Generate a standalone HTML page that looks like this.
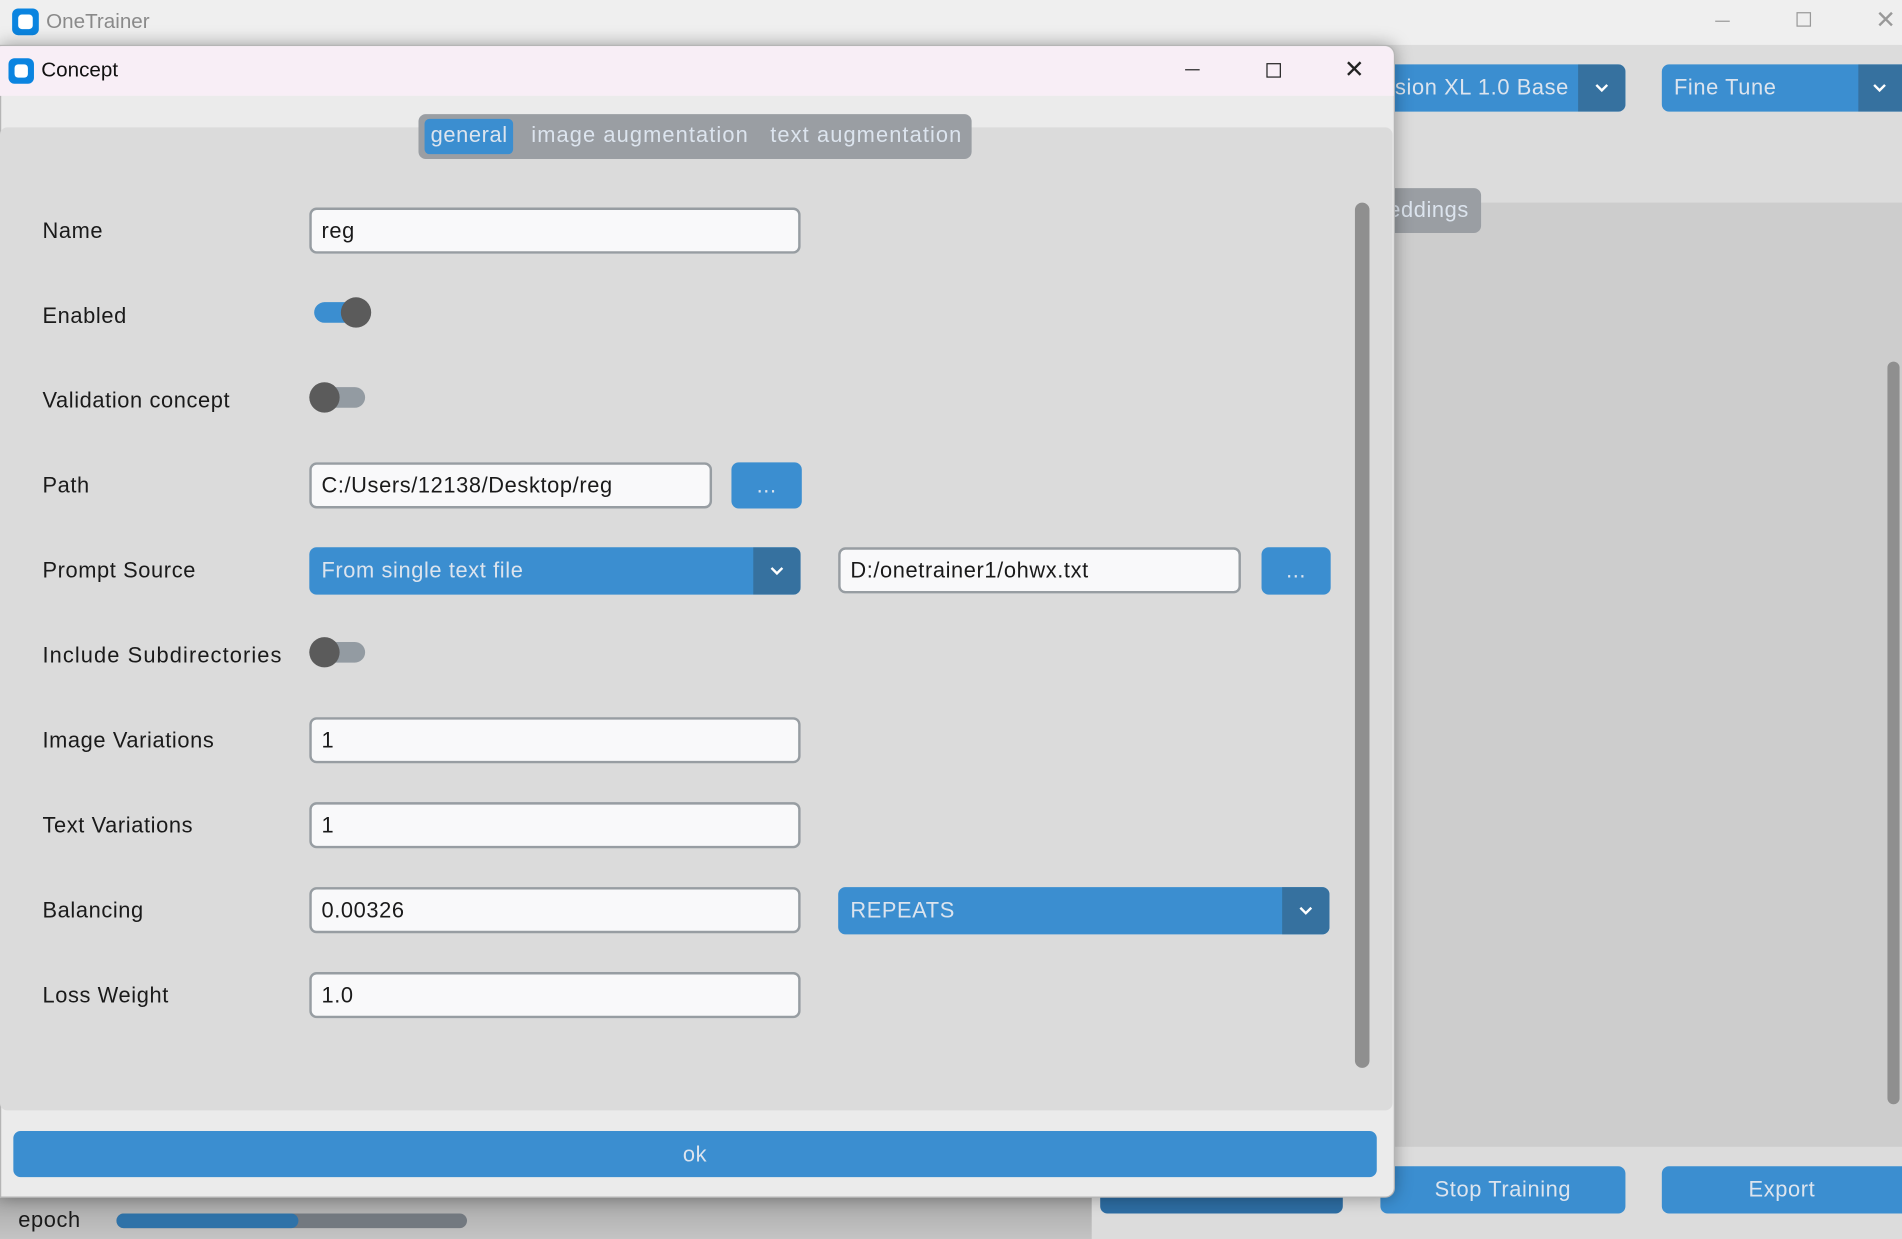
<!DOCTYPE html>
<html><head><meta charset="utf-8"><style>
*{box-sizing:border-box;margin:0;padding:0}
html,body{width:1902px;height:1239px;overflow:hidden;background:#dbdbdb}
#s{position:absolute;left:0;top:0;width:1568px;height:1021px;transform:scale(1.21301,1.21352);transform-origin:0 0;font-family:"Liberation Sans",sans-serif;font-size:18px;letter-spacing:0.5px;color:#1a1a1a;background:#dcdcdc;overflow:hidden}
.a{position:absolute}
.blue{background:#3b8ed0;color:#dce4ee;border-radius:6px}
.ent{position:absolute;height:38px;border:2px solid #979da2;background:#f9f9fa;border-radius:6px;padding:0 8px;line-height:34px;font-size:18px}
.lbl{position:absolute;left:35px;font-size:18px;line-height:22px}
.dd{position:absolute;height:39px;background:#3b8ed0;color:#dce4ee;border-radius:6px;line-height:39px;padding-left:10px;overflow:hidden}
.dd .ar{position:absolute;right:0;top:0;width:39px;height:100%;background:#36719f}
.dd .ar svg{position:absolute;left:14px;top:16px}
.knob{position:absolute;width:25px;height:25px;border-radius:50%;background:#5b5b5b}
</style></head><body><div id="s">
<div class="a" style="left:0;top:0;width:1568px;height:37px;background:#efefef"></div>
<div class="a" style="left:10px;top:7px;width:22px;height:22px;border-radius:5px;background:#0a84e0"></div>
<div class="a" style="left:15px;top:12px;width:12px;height:12px;border-radius:3px;background:#fff"></div>
<div class="a" style="left:38px;top:8px;color:#8a8a8a;font-size:17px;letter-spacing:0">OneTrainer</div>
<div class="a" style="left:1414px;top:17px;width:12px;height:1px;background:#999"></div>
<div class="a" style="left:1481px;top:10px;width:12px;height:12px;border:1px solid #999"></div>
<div class="a" style="left:1546px;top:4px;color:#999;font-size:20px">✕</div>
<div class="dd" style="left:1120px;top:53px;width:220px;padding-left:30px">sion XL 1.0 Base<div class="ar"><svg width="11" height="7"><path d="M1 1L5.5 5.5L10 1" stroke="#fff" stroke-width="2" fill="none"/></svg></div></div>
<div class="dd" style="left:1370px;top:53px;width:210px">Fine Tune<div class="ar" style="right:12px;width:36px"><svg width="11" height="7" style="left:12px"><path d="M1 1L5.5 5.5L10 1" stroke="#fff" stroke-width="2" fill="none"/></svg></div></div>
<div class="a" style="left:1150px;top:167px;width:418px;height:778px;background:#cdcdcd"></div>
<div class="a" style="left:1120px;top:155px;width:101px;height:37px;background:#9a9ea3;border-radius:6px;color:#dce4ee;line-height:37px;text-align:right;padding-right:10px">eddings</div>
<div class="a" style="left:1556px;top:298px;width:10px;height:612px;background:#8f8f8f;border-radius:5px"></div>
<div class="a blue" style="left:907px;top:961px;width:200px;height:39px;background:#2d6da3"></div>
<div class="a blue" style="left:1138px;top:961px;width:202px;height:39px;text-align:center;line-height:39px">Stop Training</div>
<div class="a blue" style="left:1370px;top:961px;width:210px;height:39px;text-align:center;line-height:39px;padding-right:12px">Export</div>
<div class="a" style="left:0;top:987px;width:900px;height:34px;background:linear-gradient(#a8a8a8,#c4c4c4)"></div>
<div class="a" style="left:15px;top:995px;font-size:18px">epoch</div>
<div class="a" style="left:96px;top:1000px;width:289px;height:12px;border-radius:6px;background:#737980"></div>
<div class="a" style="left:96px;top:1000px;width:150px;height:12px;border-radius:6px;background:#2f72a8"></div>
<div class="a" style="left:0;top:37px;width:1150px;height:950px;background:#ebebeb;border:1px solid #b5b5b5;border-radius:0 8px 8px 0;box-shadow:0 0 14px rgba(0,0,0,.35)"></div>
<div class="a" style="left:0;top:38px;width:1149px;height:41px;background:#f8eef6;border-radius:0 8px 0 0"></div>
<div class="a" style="left:7px;top:48px;width:21px;height:21px;border-radius:5px;background:#0a84e0"></div>
<div class="a" style="left:12px;top:53px;width:11px;height:11px;border-radius:3px;background:#fff"></div>
<div class="a" style="left:34px;top:48px;font-size:17px;color:#111;letter-spacing:0">Concept</div>
<div class="a" style="left:977px;top:57px;width:12px;height:1px;background:#222"></div>
<div class="a" style="left:1044px;top:52px;width:12px;height:12px;border:1px solid #222"></div>
<div class="a" style="left:1108px;top:45px;font-size:20px;color:#222">✕</div>
<div class="a" style="left:0;top:105px;width:1148px;height:810px;background:#dbdbdb;border-radius:6px"></div>
<div class="a" style="left:345px;top:94px;width:456px;height:37px;background:#9a9ea3;border-radius:6px"></div>
<div class="a blue" style="left:350px;top:98px;width:73px;height:29px;border-radius:4px"></div>
<div class="a" style="left:355px;top:101px;color:#dce4ee">general</div>
<div class="a" style="left:438px;top:101px;color:#dce4ee;letter-spacing:0.9px">image augmentation</div>
<div class="a" style="left:635px;top:101px;color:#dce4ee;letter-spacing:0.9px">text augmentation</div>
<div class="a" style="left:1117px;top:167px;width:12px;height:713px;background:#8f8f8f;border-radius:6px"></div>

<div class="lbl" style="top:179px">Name</div>
<div class="ent" style="left:255px;top:171px;width:405px">reg</div>
<div class="lbl" style="top:249px">Enabled</div>
<div class="a" style="left:259px;top:249px;width:46px;height:17px;border-radius:9px;background:#3b8ed0"></div>
<div class="knob" style="left:281px;top:245px"></div>
<div class="lbl" style="top:319px">Validation concept</div>
<div class="a" style="left:255px;top:319px;width:46px;height:17px;border-radius:9px;background:#939ba2"></div>
<div class="knob" style="left:255px;top:315px"></div>
<div class="lbl" style="top:389px">Path</div>
<div class="ent" style="left:255px;top:381px;width:332px">C:/Users/12138/Desktop/reg</div>
<div class="a blue" style="left:603px;top:381px;width:58px;height:38px;text-align:center;line-height:38px">...</div>
<div class="lbl" style="top:459px">Prompt Source</div>
<div class="dd" style="left:255px;top:451px;width:405px">From single text file<div class="ar"><svg width="11" height="7"><path d="M1 1L5.5 5.5L10 1" stroke="#fff" stroke-width="2" fill="none"/></svg></div></div>
<div class="ent" style="left:691px;top:451px;width:332px">D:/onetrainer1/ohwx.txt</div>
<div class="a blue" style="left:1040px;top:451px;width:57px;height:39px;text-align:center;line-height:39px">...</div>
<div class="lbl" style="top:529px;letter-spacing:0.9px">Include Subdirectories</div>
<div class="a" style="left:255px;top:529px;width:46px;height:17px;border-radius:9px;background:#939ba2"></div>
<div class="knob" style="left:255px;top:525px"></div>
<div class="lbl" style="top:599px">Image Variations</div>
<div class="ent" style="left:255px;top:591px;width:405px">1</div>
<div class="lbl" style="top:669px">Text Variations</div>
<div class="ent" style="left:255px;top:661px;width:405px">1</div>
<div class="lbl" style="top:739px">Balancing</div>
<div class="ent" style="left:255px;top:731px;width:405px">0.00326</div>
<div class="dd" style="left:691px;top:731px;width:405px">REPEATS<div class="ar"><svg width="11" height="7"><path d="M1 1L5.5 5.5L10 1" stroke="#fff" stroke-width="2" fill="none"/></svg></div></div>
<div class="lbl" style="top:809px">Loss Weight</div>
<div class="ent" style="left:255px;top:801px;width:405px">1.0</div>

<div class="a blue" style="left:11px;top:932px;width:1124px;height:38px;text-align:center;line-height:38px">ok</div>
</div></body></html>
